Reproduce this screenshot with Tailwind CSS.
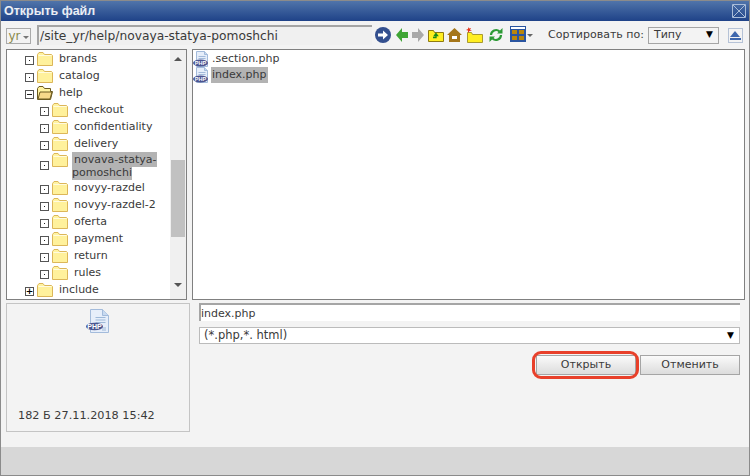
<!DOCTYPE html>
<html lang="ru">
<head>
  <meta charset="UTF-8">
  <title>Открыть файл</title>
  <script src="https://cdn.jsdelivr.net/npm/@tailwindcss/browser@4"></script>
</head>
<body class="w-[750px] h-[476px] overflow-hidden bg-[#f3f3f3] font-['DejaVu_Sans',sans-serif] text-[11px] text-[#3a3a3a]">
  <!-- shared icons -->
  <svg class="hidden">
    <symbol id="folder" viewBox="0 0 16 14">
      <path d="M.5 13.500V2.500L2 .5h4l1.500 2h7l1 1v10z" fill="#fff3a0" stroke="#dcb659"/>
      <path d="M1.500 4h13v9h-13z" fill="#fff19c"/>
      <path d="M1.500 3.500h13" stroke="#fffbe0"/>
    </symbol>
    <symbol id="php" viewBox="0 0 16 16">
      <path d="M3.500.5h8l3 3v12h-11z" fill="#e6eefa" stroke="#a3bbdb"/>
      <path d="M11.500.5v3h3" fill="#c8daf0" stroke="#a3bbdb"/>
      <path d="M5.500 5.500h7M5.500 7.500h7" stroke="#a3bbdb"/>
      <ellipse cx="7.500" cy="12" rx="7.500" ry="3.500" fill="#4b5590"/>
      <text x="7.500" y="14" text-anchor="middle" font-family="Liberation Sans" font-weight="700" font-size="5.500" fill="#fff">PHP</text>
    </symbol>
    <symbol id="php-big" viewBox="0 0 23 25">
      <path d="M4.500.5h12l6 6v17h-18z" fill="#e6eefa" stroke="#a3bbdb"/>
      <path d="M16.500.5v6h6" fill="#c8daf0" stroke="#a3bbdb"/>
      <path d="M9.500 8.500h10M9.500 11h10M9.500 13.500h10M16 19h4M16 21h4" stroke="#9db8d8"/>
      <ellipse cx="8.500" cy="17.500" rx="8.500" ry="3.800" fill="#4b5590"/>
      <text x="8.500" y="20" text-anchor="middle" font-family="Liberation Sans" font-weight="700" font-size="7" fill="#fff">PHP</text>
    </symbol>
  </svg>

  <div class="relative h-full border border-[#8b8b8b] flex flex-col">
    <!-- title -->
    <div class="h-[20px] shrink-0 flex items-center justify-between pl-[3px] pr-[3px] bg-gradient-to-b from-[#5074aa] to-[#1f4288]">
      <span class="font-['Liberation_Sans',sans-serif] font-bold text-[12.500px] text-white/90">Открыть файл</span>
      <svg class="w-[14px] h-[14px]" viewBox="0 0 14 14" fill="none" stroke="#a9bcd8"><path d="M.5.500h13v13H.5zM1 1l12 12M13 1 1 13"/></svg>
    </div>

    <!-- toolbar -->
    <div class="h-[27px] shrink-0 flex items-center pl-[5px]">
      <div class="w-[25px] h-[16px] mt-[2px] border border-[#aaa] flex items-center justify-center gap-[2px] text-[12px] text-[#8a8a4c]">yr<span class="w-0 h-0 border-x-[3px] border-x-transparent border-t-[3px] border-t-[#777] mt-[3px]"></span></div>
      <div class="ml-[6px] w-[335px] h-[20px] border-2 border-b-0 border-r-0 border-[#a5a5a5] bg-[#f0f0f0] flex items-center text-[12.250px] leading-none pl-px mt-[1px]">/site_yr/help/novaya-statya-pomoshchi</div>
      <div class="ml-[3px] flex items-center mt-[1px]">
        <svg class="w-[16px] h-[16px]" viewBox="0 0 16 16"><circle cx="8" cy="8" r="8" fill="#34508f"/><path d="M3 6.500h5V3.500L13 8l-5 4.500v-3H3z" fill="#fff"/></svg>
        <svg class="ml-[5px] w-[12px] h-[14px]" viewBox="0 0 12 14"><path d="M0 7l6-7v4h6v6H6v4z" fill="#3fa535"/></svg>
        <svg class="ml-[4px] w-[12px] h-[14px]" viewBox="0 0 12 14"><path d="M12 7 6 0v4H0v6h6v4z" fill="#a9a9a9"/></svg>
        <svg class="ml-[4px] w-[16px] h-[13px]" viewBox="0 0 16 13"><path d="M.5 12.500V1.500h5l1 2h9v9z" fill="#ffee22" stroke="#8f7a10"/><path d="M5 8.500h3V6M8 4.500 6.500 6.500h3z" fill="none" stroke="#1a8a1a" stroke-width="1.300"/></svg>
        <svg class="ml-[3px] w-[15px] h-[14px]" viewBox="0 0 15 14"><path d="M7.500 0 15 7h-2v7H2V7H0z" fill="#a5761a"/><path d="M5 8h5v3H5z" fill="#fff"/></svg>
        <svg class="ml-[4px] w-[17px] h-[16px]" viewBox="0 0 17 16"><path d="M1.500 15.500v-10h4l1 2h10v8z" fill="#ffee22" stroke="#a89a30"/><path d="M2 0l1 1.500L5 1 4 3l2 1H3.500L2 6V3.500L0 3l2-1z" fill="#e5341c"/></svg>
        <svg class="ml-[6px] w-[14px] h-[14px]" viewBox="0 0 14 14" fill="none" stroke="#2c9a35" stroke-width="2.200"><path d="M2 7a5 5 0 0 1 8.500-3.500M12 7a5 5 0 0 1-8.500 3.500"/><path d="M13.500 0v5.500H8zM.5 14V8.500H6z" fill="#2c9a35" stroke="none"/></svg>
        <svg class="ml-[7px] w-[16px] h-[16px] -mt-[2px]" viewBox="0 0 16 16"><path d="M0 0h16v16H0z" fill="#2a55a0"/><path d="M1 1h14v2H1z" fill="#fff"/><path d="M2 4h5v4H2zM9 4h5v4H9zM2 10h5v4H2zM9 10h5v4H9z" fill="#b8860b"/></svg>
        <span class="ml-px w-0 h-0 border-x-[3px] border-x-transparent border-t-[3px] border-t-[#666]"></span>
      </div>
      <span class="ml-[15px] text-[11px] mt-[2px]">Сортировать по:</span>
      <div class="ml-[4px] w-[71px] h-[17px] mt-[1px] border border-[#a5a5a5] flex items-center justify-between pl-[5px] pr-[5px]"><span class="text-[11px]">Типу</span><span class="text-[9px] text-black">▼</span></div>
      <div class="ml-[9px] w-[15px] h-[15px] mt-[1px] border border-[#b5c2d6] flex flex-col items-center justify-center">
        <span class="w-0 h-0 border-x-[5px] border-x-transparent border-b-[6px] border-b-[#3f67ad]"></span>
        <span class="w-[11px] h-[2px] bg-[#3f67ad] mt-px"></span>
      </div>
    </div>

    <!-- panels -->
    <div class="h-[251px] shrink-0 flex pl-[5px] mt-px">
      <div class="w-[181px] border border-[#808080] bg-white flex relative overflow-hidden">
        <div class="flex-1 leading-[13px] text-[11px]">
          <div class="h-[17px] flex items-center pl-[18px]"><span class="w-[9px] h-[9px] mt-[3px] border border-[#555] flex items-center justify-center"><i class="block w-px h-px bg-[#222]"></i></span><svg class="ml-[3px] w-[16px] h-[14px]"><use href="#folder"/></svg><span class="ml-[6px]">brands</span></div>
          <div class="h-[17px] flex items-center pl-[18px]"><span class="w-[9px] h-[9px] mt-[3px] border border-[#555] flex items-center justify-center"><i class="block w-px h-px bg-[#222]"></i></span><svg class="ml-[3px] w-[16px] h-[14px]"><use href="#folder"/></svg><span class="ml-[6px]">catalog</span></div>
          <div class="h-[17px] flex items-center pl-[18px]"><span class="w-[9px] h-[9px] mt-[3px] border border-[#555] flex items-center justify-center"><i class="block w-[5px] h-px bg-[#222]"></i></span><svg class="ml-[3px] w-[16px] h-[14px]" viewBox="0 0 16 14"><path d="M.5 13.500V2.500L2 .5h4l1.500 2h6v3h2l-2 8z" fill="#fff3a0" stroke="#6b5a20"/><path d="M3 6h12l-2 7H1z" fill="#f6d98a" stroke="#6b5a20"/></svg><span class="ml-[6px]">help</span></div>
          <div class="h-[17px] flex items-center pl-[33px]"><span class="w-[9px] h-[9px] mt-[3px] border border-[#555] flex items-center justify-center"><i class="block w-px h-px bg-[#222]"></i></span><svg class="ml-[3px] w-[16px] h-[14px]"><use href="#folder"/></svg><span class="ml-[6px]">checkout</span></div>
          <div class="h-[17px] flex items-center pl-[33px]"><span class="w-[9px] h-[9px] mt-[3px] border border-[#555] flex items-center justify-center"><i class="block w-px h-px bg-[#222]"></i></span><svg class="ml-[3px] w-[16px] h-[14px]"><use href="#folder"/></svg><span class="ml-[6px]">confidentiality</span></div>
          <div class="h-[17px] flex items-center pl-[33px]"><span class="w-[9px] h-[9px] mt-[3px] border border-[#555] flex items-center justify-center"><i class="block w-px h-px bg-[#222]"></i></span><svg class="ml-[3px] w-[16px] h-[14px]"><use href="#folder"/></svg><span class="ml-[6px]">delivery</span></div>
          <div class="h-[27px] flex items-start pl-[33px]"><span class="w-[9px] h-[9px] mt-[9px] border border-[#555] flex items-center justify-center"><i class="block w-px h-px bg-[#222]"></i></span><svg class="ml-[3px] mt-[1px] w-[16px] h-[14px]"><use href="#folder"/></svg><div class="ml-[4px] w-[90px] shrink-0 mt-px leading-[13px] whitespace-nowrap"><span class="bg-[#b3b3b3] pl-[2px] py-px">novava-statya-</span><br><span class="bg-[#b3b3b3] py-px">pomoshchi</span></div></div>
          <div class="h-[17px] flex items-center pl-[33px]"><span class="w-[9px] h-[9px] mt-[3px] border border-[#555] flex items-center justify-center"><i class="block w-px h-px bg-[#222]"></i></span><svg class="ml-[3px] w-[16px] h-[14px]"><use href="#folder"/></svg><span class="ml-[6px]">novyy-razdel</span></div>
          <div class="h-[17px] flex items-center pl-[33px]"><span class="w-[9px] h-[9px] mt-[3px] border border-[#555] flex items-center justify-center"><i class="block w-px h-px bg-[#222]"></i></span><svg class="ml-[3px] w-[16px] h-[14px]"><use href="#folder"/></svg><span class="ml-[6px]">novyy-razdel-2</span></div>
          <div class="h-[17px] flex items-center pl-[33px]"><span class="w-[9px] h-[9px] mt-[3px] border border-[#555] flex items-center justify-center"><i class="block w-px h-px bg-[#222]"></i></span><svg class="ml-[3px] w-[16px] h-[14px]"><use href="#folder"/></svg><span class="ml-[6px]">oferta</span></div>
          <div class="h-[17px] flex items-center pl-[33px]"><span class="w-[9px] h-[9px] mt-[3px] border border-[#555] flex items-center justify-center"><i class="block w-px h-px bg-[#222]"></i></span><svg class="ml-[3px] w-[16px] h-[14px]"><use href="#folder"/></svg><span class="ml-[6px]">payment</span></div>
          <div class="h-[17px] flex items-center pl-[33px]"><span class="w-[9px] h-[9px] mt-[3px] border border-[#555] flex items-center justify-center"><i class="block w-px h-px bg-[#222]"></i></span><svg class="ml-[3px] w-[16px] h-[14px]"><use href="#folder"/></svg><span class="ml-[6px]">return</span></div>
          <div class="h-[17px] flex items-center pl-[33px]"><span class="w-[9px] h-[9px] mt-[3px] border border-[#555] flex items-center justify-center"><i class="block w-px h-px bg-[#222]"></i></span><svg class="ml-[3px] w-[16px] h-[14px]"><use href="#folder"/></svg><span class="ml-[6px]">rules</span></div>
          <div class="h-[17px] flex items-center pl-[18px]"><span class="w-[9px] h-[9px] mt-[3px] border border-[#555] flex items-center justify-center text-[9px] leading-none text-black font-bold">+</span><svg class="ml-[3px] w-[16px] h-[14px]"><use href="#folder"/></svg><span class="ml-[6px]">include</span></div>
        </div>
        <!-- scrollbar -->
        <div class="w-[16px] shrink-0 bg-[#f0f0f0] flex flex-col items-center">
          <span class="mt-[7px] w-0 h-0 border-x-[4px] border-x-transparent border-b-[4px] border-b-[#555]"></span>
          <div class="mt-[99px] w-[14px] h-[77px] bg-[#c1c1c1]"></div>
          <span class="mt-[46px] w-0 h-0 border-x-[4px] border-x-transparent border-t-[4px] border-t-[#555]"></span>
        </div>
      </div>
      <div class="ml-[5px] w-[553px] border border-[#808080] bg-white text-[11px] pt-px">
        <div class="h-[16px] flex items-center"><svg class="w-[16px] h-[16px]"><use href="#php"/></svg><span class="ml-[3px]">.section.php</span></div>
        <div class="h-[16px] flex items-center"><svg class="w-[16px] h-[16px]"><use href="#php"/></svg><span class="ml-[2px] bg-[#b3b3b3] px-px">index.php</span></div>
      </div>
    </div>

    <!-- bottom -->
    <div class="flex pl-[5px] mt-[3px]">
      <div class="w-[184px] h-[129px] border border-[#c4c4c4] flex flex-col items-center">
        <svg class="mt-[5px] -ml-[1px] w-[23px] h-[25px]"><use href="#php-big"/></svg>
        <span class="mt-auto mb-[6px] self-start ml-[11px] text-[11.250px]">182 Б 27.11.2018 15:42</span>
      </div>
      <div class="ml-[9px] w-[541px] flex flex-col">
        <div class="h-[18px] bg-white border-l-2 border-t-2 border-[#a5a5a5] flex items-center text-[11px] leading-none">index.php</div>
        <div class="mt-[6px] h-[17px] bg-white border border-[#bbb] flex items-center justify-between pl-[4px] pr-[5px] text-[11.500px]">(*.php,*. html)<span class="text-[9px] text-black">▼</span></div>
        <div class="mt-[11px] flex justify-end gap-[4px]">
          <button class="relative w-[100px] h-[20px] pt-px border border-[#a5a5a5] bg-gradient-to-b from-[#fafafa] to-[#dcdcdc] text-[11px]">Открыть<span class="absolute -left-[5px] -right-[4px] -top-[5px] -bottom-[5px] border-[3px] border-[#e8402a] rounded-[9px]"></span></button>
          <button class="w-[100px] h-[20px] pt-px border border-[#a5a5a5] bg-gradient-to-b from-[#fafafa] to-[#dcdcdc] text-[11px]">Отменить</button>
        </div>
      </div>
    </div>

    <div class="absolute inset-x-0 bottom-0 h-[28px] bg-[#d7d7d7]"></div>
  </div>
</body>
</html>
